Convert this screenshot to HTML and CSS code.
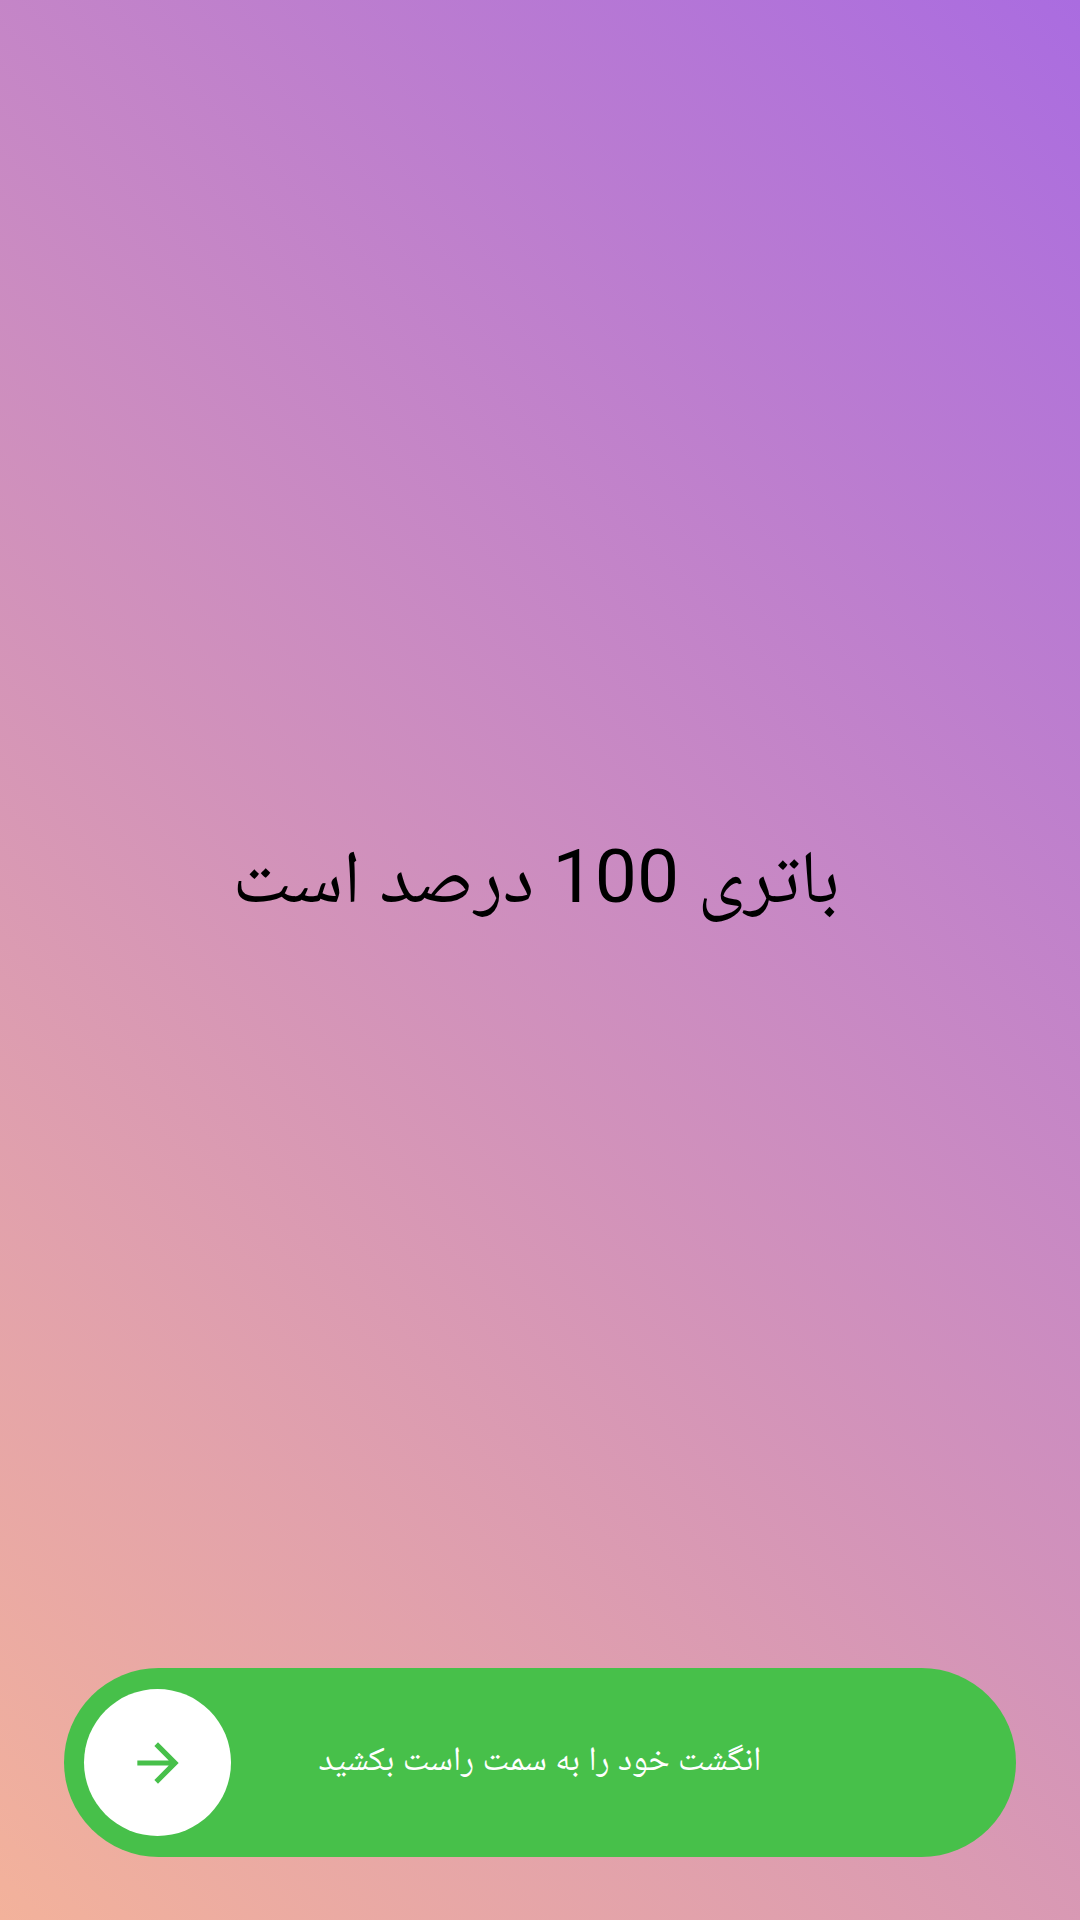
FILE: index.html
```html
<!DOCTYPE html>
<html lang="fa" dir="rtl">
<head>
<meta charset="utf-8">
<link rel="stylesheet" href="styles.css">
</head>
<body>
<div class="screen">
  <main class="content">
    <h1 class="status">باتری 100 درصد است</h1>
  </main>
  <div class="slider">
    <div class="knob">
      <svg viewBox="0 0 24 24" width="62" height="62" aria-hidden="true">
        <path d="M12 4l-1.41 1.41L16.17 11H4v2h12.17l-5.58 5.59L12 20l8-8z" fill="#47c04a"/>
      </svg>
    </div>
    <span class="hint">انگشت خود را به سمت راست بکشید</span>
  </div>
</div>
</body>
</html>
```
FILE: styles.css
```css
html, body {
  margin: 0;
  padding: 0;
  width: 1080px;
  height: 1920px;
  overflow: hidden;
}
body {
  font-family: Roboto, "Noto Naskh Arabic", "Noto Sans Arabic", "DejaVu Sans", sans-serif;
}
.screen {
  width: 1080px;
  height: 1920px;
  display: flex;
  flex-direction: column;
  background: linear-gradient(45deg, #f3b29b 0%, #aa6ce0 100%);
}
.content {
  flex: 1;
  display: flex;
  align-items: center;
  justify-content: center;
  padding-top: 84px;
  padding-right: 8px;
}
.status {
  margin: 0;
  font-weight: 400;
  font-size: 75px;
  color: #000;
  line-height: 1.2;
}
.slider {
  position: relative;
  direction: ltr;
  margin: 0 64px 63px 64px;
  height: 189px;
  border-radius: 95px;
  background: #47c04a;
  display: flex;
  align-items: center;
  padding: 0 20px;
}
.knob {
  width: 147px;
  height: 147px;
  border-radius: 50%;
  background: #fff;
  display: flex;
  align-items: center;
  justify-content: center;
}
.hint {
  position: absolute;
  left: 0;
  right: 0;
  top: 50%;
  transform: translateY(-50%);
  text-align: center;
  direction: rtl;
  color: #fff;
  font-size: 34px;
}
```
